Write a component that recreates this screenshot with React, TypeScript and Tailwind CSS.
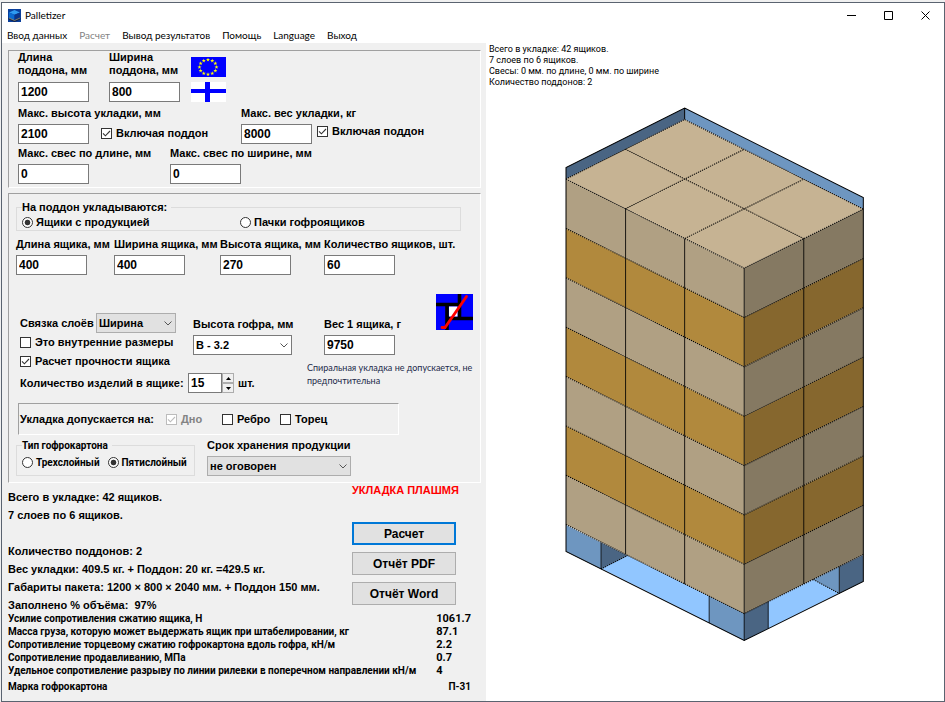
import { useId, useState } from "react"
import type { ReactNode } from "react"

// Shared classes
const inputClass = "h-5 w-[71px] bg-white border border-[#7a7a7a] px-0.5 text-xs font-bold outline-none"
const buttonClass = "h-[23px] w-full border bg-[#e1e1e1] text-xs font-bold"

const menuItems = ["Ввод данных", "Расчет", "Вывод результатов", "Помощь", "Language", "Выход"]

const strength = [
  ["Усилие сопротивления сжатию ящика, Н", "1061.7"],
  ["Масса груза, которую может выдержать ящик при штабелировании, кг", "87.1"],
  ["Сопротивление торцевому сжатию гофрокартона вдоль гофра, кН/м", "2.2"],
  ["Сопротивление продавливанию, МПа", "0.7"],
  ["Удельное сопротивление разрыву по линии рилевки в поперечном направлении кН/м", "4"],
]

function Field({ label, initial, gap = "gap-1" }: { label: ReactNode; initial: string; gap?: string }) {
  const id = useId()
  const [value, setValue] = useState(initial)
  return (
    <div className={`flex flex-col items-start ${gap}`}>
      <label htmlFor={id} className="whitespace-nowrap">{label}</label>
      <input id={id} className={inputClass} value={value} onChange={e => setValue(e.target.value)} />
    </div>
  )
}

function Check({ label, initial = false, disabled = false }: { label: string; initial?: boolean; disabled?: boolean }) {
  const [checked, setChecked] = useState(initial)
  return (
    <label className={`flex items-center gap-1 whitespace-nowrap ${disabled ? "text-[#838383]" : ""}`}>
      <span className="relative flex size-[11px] shrink-0">
        <input
          type="checkbox"
          checked={checked}
          disabled={disabled}
          onChange={e => setChecked(e.target.checked)}
          className={`size-[11px] appearance-none border bg-white ${disabled ? "border-[#bcbcbc]" : "border-[#333333]"}`}
        />
        {checked && (
          <svg viewBox="0 0 11 11" className="pointer-events-none absolute inset-0 size-[11px]">
            <path d="M2 5.3 4.4 7.8 9 3" fill="none" stroke={disabled ? "#bcbcbc" : "#333333"} strokeWidth="1.1" />
          </svg>
        )}
      </span>
      {label}
    </label>
  )
}

function Radio({ label, name, initial = false }: { label: string; name: string; initial?: boolean }) {
  return (
    <label className="flex items-center gap-[3px] whitespace-nowrap">
      <input
        type="radio"
        name={name}
        defaultChecked={initial}
        className="size-[11px] shrink-0 appearance-none rounded-full border border-[#333333] bg-white checked:bg-[radial-gradient(circle,#333333_0_2.5px,#ffffff_3.2px)]"
      />
      {label}
    </label>
  )
}

function Dropdown({ id, options, className }: { id: string; options: string[]; className: string }) {
  return (
    <div className="relative">
      <select id={id} className={`h-5 appearance-none border px-0.5 text-[11px] font-bold outline-none ${className}`}>
        {options.map(o => <option key={o}>{o}</option>)}
      </select>
      <svg viewBox="0 0 8 5" className="pointer-events-none absolute right-1 top-2 h-[5px] w-2">
        <path d="M.5.5 4 4 7.5.5" fill="none" stroke="#555555" />
      </svg>
    </div>
  )
}

function AppIcon() {
  return (
    <svg viewBox="0 0 13 13" className="size-[13px]">
      <rect width="13" height="13" fill="#0a3f9c" />
      <path d="M1 3.4 6.5 1 12 3.4 6.5 5.8z" fill="#2f9bf0" />
      <path d="M1 3.4 6.5 5.8v5.4L1 8.8z" fill="#0a6ad0" />
      <path d="M12 3.4 6.5 5.8v5.4L12 8.8z" fill="#0b3488" />
      <path d="M.5 9 6.5 11.8 12.5 9v1.6L6.5 13 .5 10.6z" fill="#10224d" />
      <path d="m1 9 5.5 2.5L12 9" fill="none" stroke="#b39a55" strokeWidth=".7" />
    </svg>
  )
}

function EuFlag() {
  const stars = Array.from({ length: 12 }, (_, i) => {
    const a = (i * Math.PI) / 6
    return [17 + Math.sin(a) * 8.5, 10 - Math.cos(a) * 7.3]
  })
  return (
    <svg viewBox="0 0 35 20" className="h-5 w-[35px]">
      <rect width="35" height="20" fill="#0000ff" />
      {stars.map(([x, y], i) => (
        <path
          key={i}
          transform={`translate(${x} ${y})`}
          d="M0-2 .5-.6 2-.6.8.4 1.2 1.8 0 .9-1.2 1.8-.8.4-2-.6-.5-.6z"
          fill="#ffff00"
        />
      ))}
    </svg>
  )
}

function FinnishFlag() {
  return (
    <svg viewBox="0 0 35 20" className="h-5 w-[35px]">
      <rect width="35" height="20" fill="#ffffff" />
      <path d="M14 0h5v20h-5zM0 7h35v4H0z" fill="#0000ff" />
    </svg>
  )
}

function SpiralIcon() {
  return (
    <svg viewBox="0 0 37 36" className="h-9 w-[37px]">
      <rect width="37" height="36" fill="#0000ff" />
      <path d="M0 10.500h25M23.500 0v24M12 24.500h25M11 10v26" fill="none" stroke="#000000" strokeWidth="3.6" />
      <path d="M13 12.500h8.500V22.500H13z" fill="#ffffff" />
      <path d="M6 33.500h3L25 10.500l5.500-8" fill="none" stroke="#ff0000" strokeWidth="2.8" strokeLinecap="round" />
    </svg>
  )
}

// Isometric view of the stacked pallet
function PalletView() {
  const layers = Array.from({ length: 7 }, (_, i) => i)
  const step = 49.3
  return (
    <svg viewBox="-3 0 305 534" className="mx-auto w-2/3 min-w-[200px] max-w-[420px]" role="img">
      {/* Pallet seen behind the top edge */}
      <path d="M1 60.500 119.500 1v11.500L1 72z" fill="#4a6583" />
      <path d="M119.500 1 298 90.500V102L119.500 12.500z" fill="#6e96c0" />

      {/* Bottom pallet */}
      <path d="M36 461 62.500 448 179 506 248 472 274 485.500 179 533z" fill="#91c6ff" />
      <path d="M1 417.500 36 435v26.500L1 444z" fill="#6e96c0" />
      <path d="M36 435 62.500 448 36 461.500z" fill="#4a6583" />
      <path d="M144 488.500 179 506v27L144 515.500z" fill="#6e96c0" />
      <path d="M179 506 203 494v27L179 533z" fill="#4a6583" />
      <path d="M248 472 274 459v27z" fill="#6e96c0" />
      <path d="M274 459 298 447.500V474L274 486z" fill="#4a6583" />

      {/* Top face */}
      <path d="M119.500 12.500 298 102 179 161 1 72z" fill="#c6b393" />

      {/* Layers */}
      {layers.map(i => {
        const y = i * step
        const gold = i % 2 === 1
        return (
          <g key={i}>
            <path d={`M1 ${72 + y} 179 ${161 + y}v${step}L1 ${72 + y + step}z`} fill={gold ? "#b1893d" : "#b0a083"} />
            <path d={`M179 ${161 + y} 298 ${102 + y}v${step}L179 ${161 + y + step}z`} fill={gold ? "#86672e" : "#857962"} />
          </g>
        )
      })}

      {/* Box edges */}
      <g fill="none" stroke="#000000" strokeWidth="1" strokeDasharray="1.300 .95">
        {[...layers, 7].map(i => (
          <path key={i} d={`M1 ${72 + i * step} 179 ${161 + i * step} 298 ${102 + i * step}`} />
        ))}
        <path d="M1 72 119.500 12.500 298 102" />
        <path d="M60.300 101.700 179 42.200M119.700 131.300 238.500 72.100M60.300 42.200 238.500 131.500" />
        <path d="M36 461.500 62.500 448M248 472 274 486" />
      </g>
      <g fill="none" stroke="#000000" strokeWidth="1">
        <path d="M1 72V60.500L119.500 1 298 90.500V474L179 533 1 444V72M119.500 1v11.500" />
        <path d="M60.500 101.500V446.800M119.500 131.500V476.500M179 161v372M238.500 131.500V476.500" strokeOpacity=".85" />
        <path d="M36 435v26.500M144 488.500v27M203 494v27M274 459v27" strokeOpacity=".8" />
      </g>
    </svg>
  )
}

export default function App() {
  const [count, setCount] = useState(15)

  return (
    <div className="flex min-h-screen flex-col bg-[#f0f0f0] pt-0.5 pl-px font-['Liberation_Sans',sans-serif] text-[11px] leading-[13px] text-black">
      <div className="flex flex-1 flex-col border border-[#5a6370] bg-[#f0f0f0]">
        {/* Title bar */}
        <header className="flex h-6 items-center bg-white pl-1.5 font-['Lato',sans-serif] text-[10px]">
          <AppIcon />
          <h1 className="ml-1">Palletizer</h1>
          <div className="ml-auto flex">
            <button aria-label="Minimize" className="flex h-6 w-[37px] items-center justify-center">
              <svg viewBox="0 0 9 9" className="size-[9px]"><path d="M0 4.500h9" stroke="#000000" /></svg>
            </button>
            <button aria-label="Maximize" className="flex h-6 w-[37px] items-center justify-center">
              <svg viewBox="0 0 9 9" className="size-[9px]"><path d="M.5.5h8v8h-8z" fill="none" stroke="#000000" /></svg>
            </button>
            <button aria-label="Close" className="flex h-6 w-[37px] items-center justify-center">
              <svg viewBox="0 0 9 9" className="size-[9px]"><path d="m.5.5 8 8m0-8-8 8" fill="none" stroke="#000000" /></svg>
            </button>
          </div>
        </header>

        {/* Menu */}
        <nav className="flex h-4 items-center gap-3 bg-white pl-[5px] font-['Lato',sans-serif] text-[10px]">
          {menuItems.map(item => (
            <button key={item} disabled={item === "Расчет"} className="whitespace-nowrap disabled:text-[#838383]">{item}</button>
          ))}
        </nav>

        <div className="grid flex-1 grid-cols-[minmax(484px,51fr)_49fr]">
          <main className="pt-[7px] pr-[5px] pl-1.5 font-bold">
            {/* Pallet parameters */}
            <section className="border border-t-[#a0a0a0] border-r-white border-b-white border-l-[#a0a0a0] pb-[3px] pl-[9px]">
              <div className="flex">
                <div className="w-[91px]">
                  <Field label={<>Длина<br />поддона, мм</>} initial="1200" gap="gap-[5px]" />
                </div>
                <div className="w-[82px]">
                  <Field label={<>Ширина<br />поддона, мм</>} initial="800" gap="gap-[5px]" />
                </div>
                <div className="flex flex-col justify-end gap-[5px]">
                  <button aria-label="Европоддон"><EuFlag /></button>
                  <button aria-label="Финский поддон"><FinnishFlag /></button>
                </div>
              </div>
              <div className="mt-[5px] grid grid-cols-[223px_1fr]">
                <div className="flex items-end">
                  <div className="w-[83px]"><Field label="Макс. высота укладки, мм" initial="2100" /></div>
                  <div className="pb-1"><Check label="Включая поддон" initial /></div>
                </div>
                <div className="flex items-end">
                  <div className="w-[76px]"><Field label="Макс. вес укладки, кг" initial="8000" /></div>
                  <div className="pb-1.5"><Check label="Включая поддон" initial /></div>
                </div>
              </div>
              <div className="mt-[3px] grid grid-cols-[152px_1fr]">
                <Field label="Макс. свес по длине, мм" initial="0" />
                <Field label="Макс. свес по ширине, мм" initial="0" />
              </div>
            </section>

            {/* Box parameters */}
            <section className="mt-[5px] border border-t-[#a0a0a0] border-r-white border-b-white border-l-[#a0a0a0] px-[7px] pt-[7px] pb-1.5">
              <fieldset className="mr-3 border border-[#dcdcdc] pl-[5px]">
                <legend className="pr-1">На поддон укладываются:</legend>
                <div className="grid h-4 grid-cols-[218px_1fr] items-center">
                  <Radio label="Ящики с продукцией" name="content" initial />
                  <Radio label="Пачки гофроящиков" name="content" />
                </div>
              </fieldset>

              <div className="mt-[7px] grid grid-cols-[98px_106px_104px_1fr]">
                <Field label="Длина ящика, мм" initial="400" />
                <Field label="Ширина ящика, мм" initial="400" />
                <Field label="Высота ящика, мм" initial="270" />
                <Field label="Количество ящиков, шт." initial="60" />
              </div>

              <div className="mt-[19px] grid grid-cols-[177px_114px_1fr]">
                <div className="pt-[19px] pl-1">
                  <div className="flex items-center gap-1">
                    <label htmlFor="binding" className="w-[72px] whitespace-nowrap">Связка слоёв</label>
                    <Dropdown id="binding" options={["Ширина", "Длина"]} className="w-20 border-[#adadad] bg-[#e1e1e1]" />
                  </div>
                  <div className="mt-[3px] flex flex-col gap-1.5">
                    <Check label="Это внутренние размеры" />
                    <Check label="Расчет прочности ящика" initial />
                  </div>
                  <div className="mt-[5px] flex items-center">
                    <label htmlFor="items" className="w-[168px] shrink-0 whitespace-nowrap">Количество изделий в ящике:</label>
                    <input
                      id="items"
                      className="h-5 w-[34px] shrink-0 border border-[#7a7a7a] bg-white px-0.5 text-xs font-bold outline-none"
                      value={count}
                      onChange={e => setCount(Number(e.target.value) || 0)}
                    />
                    <div className="flex shrink-0 flex-col">
                      <button aria-label="Больше" onClick={() => setCount(count + 1)} className="flex h-2.5 w-3 items-center justify-center border border-[#adadad] bg-[#f0f0f0]">
                        <svg viewBox="0 0 5 3" className="h-[3px] w-[5px]"><path d="M0 3 2.500 0 5 3z" /></svg>
                      </button>
                      <button aria-label="Меньше" onClick={() => setCount(Math.max(0, count - 1))} className="flex h-2.5 w-3 items-center justify-center border border-[#adadad] bg-[#f0f0f0]">
                        <svg viewBox="0 0 5 3" className="h-[3px] w-[5px]"><path d="M0 0 2.500 3 5 0z" /></svg>
                      </button>
                    </div>
                    <span className="ml-1">шт.</span>
                  </div>
                </div>
                <div className="flex flex-col items-start gap-1 pt-6">
                  <label htmlFor="flute" className="whitespace-nowrap">Высота гофра, мм</label>
                  <Dropdown id="flute" options={["B - 3.2", "C - 4.0", "E - 1.6"]} className="w-[99px] border-[#7a7a7a] bg-white" />
                </div>
                <div>
                  <div className="flex items-start justify-between pl-[17px]">
                    <div className="pt-6"><Field label="Вес 1 ящика, г" initial="9750" /></div>
                    <button aria-label="Спиральная укладка"><SpiralIcon /></button>
                  </div>
                  <p className="mt-1.5 max-w-[168px] font-['Lato',sans-serif] text-[9px] font-normal text-[#1c2a4a]">
                    Спиральная укладка не допускается, не предпочтительна
                  </p>
                </div>
              </div>

              <div className="mt-2.5 mr-[74px] ml-0.5 flex h-8 items-center border border-t-[#a0a0a0] border-r-white border-b-white border-l-[#a0a0a0] pl-px">
                <span className="w-[146px] whitespace-nowrap">Укладка допускается на:</span>
                <div className="w-14"><Check label="Дно" initial disabled /></div>
                <div className="w-[58px]"><Check label="Ребро" /></div>
                <Check label="Торец" />
              </div>

              <div className="mt-1 grid grid-cols-[179px_1fr] gap-3">
                <fieldset className="border border-[#dcdcdc] pl-[5px] font-['Roboto',sans-serif] text-[10px]">
                  <legend className="pr-1">Тип гофрокартона</legend>
                  <div className="flex h-5 items-center gap-2">
                    <Radio label="Трехслойный" name="board" />
                    <Radio label="Пятислойный" name="board" initial />
                  </div>
                </fieldset>
                <div className="flex flex-col items-start gap-1">
                  <label htmlFor="storage">Срок хранения продукции</label>
                  <Dropdown id="storage" options={["не оговорен", "1 месяц", "3 месяца"]} className="w-36 border-[#adadad] bg-[#e1e1e1]" />
                </div>
              </div>
            </section>

            {/* Results */}
            <div className="grid grid-cols-[344px_104px]">
              <div className="pt-[5px] leading-[18px]">
                <p>Всего в укладке: 42 ящиков.</p>
                <p>7 слоев по 6 ящиков.</p>
                <p className="mt-[18px]">Количество поддонов: 2</p>
                <p>Вес укладки: 409.5 кг. + Поддон: 20 кг. =429.5 кг.</p>
                <p>Габариты пакета: 1200 × 800 × 2040 мм. + Поддон 150 мм.</p>
                <p className="whitespace-pre">Заполнено % объёма:  97%</p>
              </div>
              <div className="flex flex-col gap-[7px] pt-px">
                <p className="mb-[18px] text-center whitespace-nowrap text-[#ff0000]">УКЛАДКА ПЛАШМЯ</p>
                <button className={`${buttonClass} border-2 border-[#0078d7]`}>Расчет</button>
                <button className={`${buttonClass} border-[#adadad]`}>Отчёт PDF</button>
                <button className={`${buttonClass} border-[#adadad]`}>Отчёт Word</button>
              </div>
            </div>

            <table className="-mt-0.5 w-[463px] text-left font-['Roboto',sans-serif] text-[10px]">
              <tbody>
                {strength.map(([name, value]) => (
                  <tr key={name}>
                    <td className="w-[430px] p-0 whitespace-nowrap">{name}</td>
                    <td className="p-0 text-[11px]">{value}</td>
                  </tr>
                ))}
                <tr>
                  <td className="pt-[3px] whitespace-nowrap">Марка гофрокартона</td>
                  <td className="pt-[3px] text-right">П-31</td>
                </tr>
              </tbody>
            </table>
          </main>

          {/* Stack preview */}
          <aside className="bg-white pt-px">
            <div className="pl-[3px] font-['Roboto',sans-serif] text-[9px] leading-[11px]">
              <p>Всего в укладке: 42 ящиков.</p>
              <p>7 слоев по 6 ящиков.</p>
              <p>Свесы: 0 мм. по длине, 0 мм. по ширине</p>
              <p>Количество поддонов: 2</p>
            </div>
            <div className="pt-[19px]"><PalletView /></div>
          </aside>
        </div>
      </div>
    </div>
  )
}
